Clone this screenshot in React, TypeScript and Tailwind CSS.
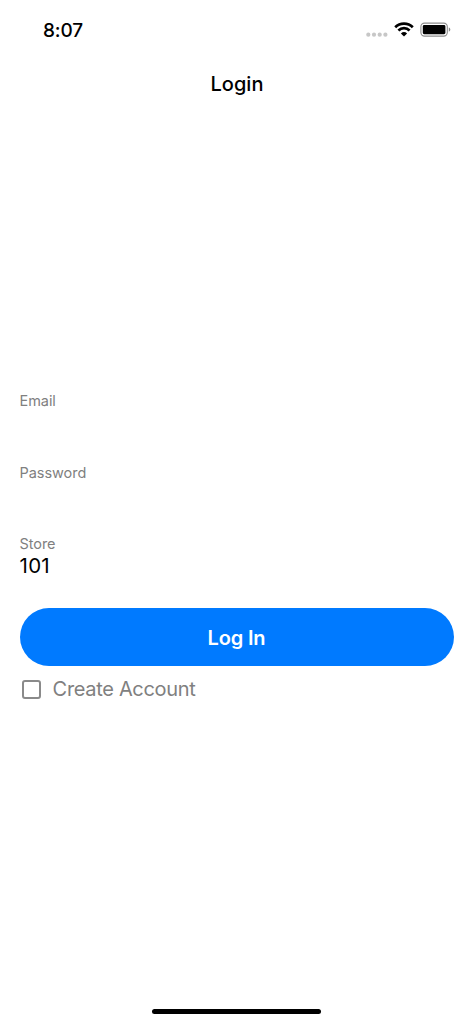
import React from "react";

function Wifi() {
  return (
    <svg width="20" height="15" viewBox="0 0 20 15" fill="none" stroke="#000" strokeWidth="2.7">
      <path d="M1.2 5.2a12.6 12.6 0 0 1 17.6 0" />
      <path d="M4.4 8.5a8 8 0 0 1 11.2 0" />
      <path d="M10 14.5l-3.1-3.1a4.5 4.5 0 0 1 6.2 0z" fill="#000" stroke="none" />
    </svg>
  );
}

function Battery() {
  return (
    <svg width="32" height="15" viewBox="0 0 32 15">
      <rect x="0.9" y="1.1" width="26.4" height="13" rx="3.6" fill="none" stroke="#8c8c8c" strokeWidth="1.1" />
      <rect x="2.8" y="3" width="22.6" height="9.2" rx="1.4" fill="#000" />
      <path d="M28.8 5.4v4.4c.9-.4 1.5-1.2 1.5-2.2S29.7 5.8 28.8 5.4z" fill="#888" />
    </svg>
  );
}

function Field({ label, value }: { label: string; value?: string }) {
  return (
    <div className="h-[71.3px]">
      <div className="text-[14.5px] leading-[18px] tracking-[-0.05px] text-[#808080]">{label}</div>
      <div className="h-[29px] text-[20.5px] leading-[26px] tracking-[0.3px] text-black">{value}</div>
    </div>
  );
}

export default function App() {
  return (
    <main className="flex h-[1024px] w-[473px] flex-col bg-white font-['Inter',sans-serif]">
      <header className="flex h-[60px] justify-between pr-[21px] pl-[43px]">
        <span className="pt-[19px] text-[19px] leading-6 font-medium tracking-[-0.15px] text-black">8:07</span>
        <div className="flex pt-[22px]">
          <svg className="mt-[10px] mr-[6px]" width="22" height="5" viewBox="0 0 22 5" fill="#c7c7c7">
            <circle cx="2.3" cy="2.7" r="2.1" />
            <circle cx="8" cy="2.7" r="2.1" />
            <circle cx="13.7" cy="2.7" r="2.1" />
            <circle cx="19.4" cy="2.7" r="2.1" />
          </svg>
          <Wifi />
          <span className="w-[6px]" />
          <Battery />
        </div>
      </header>
      <h1 className="mt-[11px] pl-px text-center text-[20px] leading-[26px] font-medium text-black">Login</h1>
      <form className="mt-[295.4px] pr-[19.5px] pl-[19.5px]">
        <Field label="Email" />
        <Field label="Password" />
        <Field label="Store" value="101" />
        <button type="button" className="mt-[1.6px] block h-[58.4px] w-full rounded-full bg-[#007aff] pt-px text-[20px] font-semibold tracking-[-0.15px] text-white">Log In</button>
        <label className="flex h-[46px] items-center gap-[12px] pl-[2.1px] text-[20px] tracking-[-0.32px] text-[#808080]">
          <span className="size-[19px] rounded-[3px] border-2 border-[#8a8a8a]" />
          Create Account
        </label>
      </form>
      <div className="mt-auto mb-[10px] h-[5px] w-[169px] self-center rounded-full bg-black" />
    </main>
  );
}
